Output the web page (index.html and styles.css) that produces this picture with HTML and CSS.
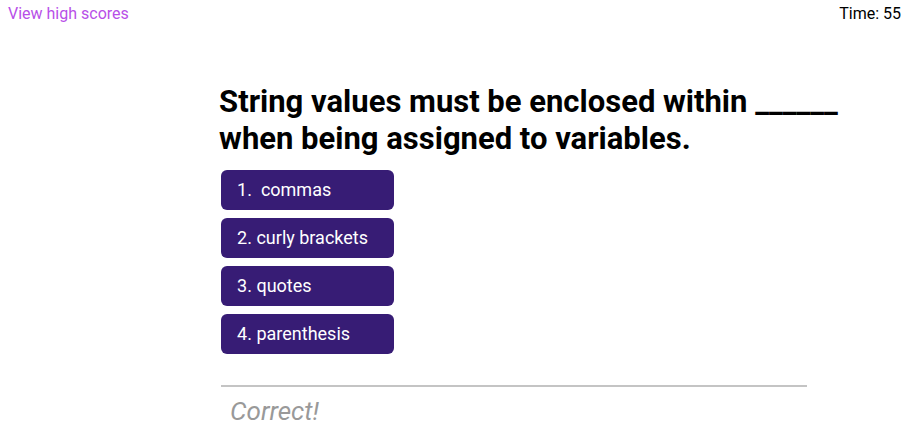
FILE: index.html
```html
<!DOCTYPE html>
<html lang="en">
<head>
<meta charset="utf-8">
<title>Code Quiz</title>
<link rel="stylesheet" href="styles.css">
</head>
<body>
<header class="topbar">
  <a class="scores" href="#scores">View high scores</a>
  <div class="timer">Time: 55</div>
</header>
<main class="quiz">
  <h1 class="question">String values must be enclosed within ______ when being assigned to variables.</h1>
  <div class="choices">
    <button class="choice" type="button">1.&nbsp; commas</button>
    <button class="choice" type="button">2. curly brackets</button>
    <button class="choice" type="button">3. quotes</button>
    <button class="choice" type="button">4. parenthesis</button>
  </div>
  <p class="feedback">Correct!</p>
</main>
</body>
</html>
```

FILE: styles.css
```css
* {
  box-sizing: border-box;
}

body {
  margin: 0;
  background: #fff;
  color: #000;
  font-family: Roboto, sans-serif;
  font-size: 16px;
}

.topbar {
  display: flex;
  justify-content: space-between;
  padding: 4px 12px 0 8px;
  line-height: 19px;
}

.scores {
  color: #b84fe8;
  text-decoration: none;
}

.quiz {
  width: 70%;
  margin: 60px 0 0 24%;
}

.question {
  margin: 0;
  font-size: 31px;
  font-weight: 700;
  line-height: 37px;
}

.choices {
  display: flex;
  flex-direction: column;
  align-items: flex-start;
  gap: 8px;
  margin: 13px 0 0 2px;
}

.choice {
  width: 173px;
  padding: 9px 16px;
  border: 0;
  border-radius: 6px;
  background: #371c75;
  color: #fff;
  font: inherit;
  font-size: 18px;
  line-height: 22px;
  text-align: left;
}

.feedback {
  margin: 31px 8% 0 2px;
  padding: 8px 9px;
  border-top: 2px solid #c4c4c4;
  color: #999;
  font-size: 26px;
  font-style: italic;
  line-height: 32px;
}
```
